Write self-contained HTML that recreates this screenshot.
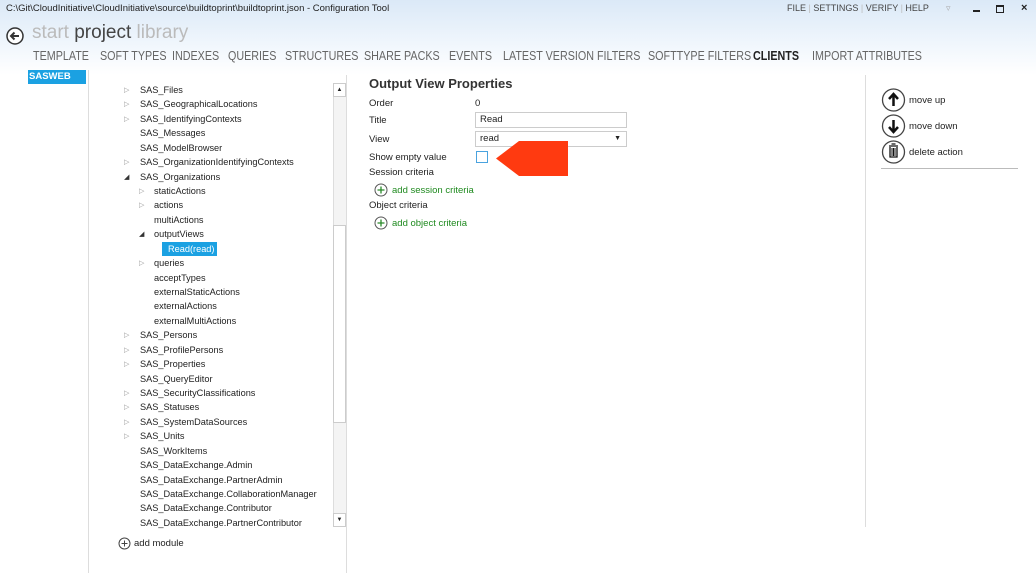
<!DOCTYPE html>
<html><head><style>
body{margin:0;width:1036px;height:573px;overflow:hidden;font-family:"Liberation Sans",sans-serif;color:#222;background:linear-gradient(#dbe9f7 0,#eef5fc 40px,#fff 75px,#fff);position:relative}
.a{position:absolute;white-space:nowrap}
.t{font-size:9.5px}
.tree div{position:absolute;font-size:9.2px;white-space:nowrap;height:14px;line-height:14px}
.arr{position:absolute;font-size:7px;color:#999}
.nav span{position:absolute;top:49px;font-size:12.5px;color:#666;transform:scaleX(0.86);transform-origin:0 0;white-space:nowrap}
</style></head><body>
<div class="a" style="left:6px;top:3px;font-size:9.5px;color:#222">C:\Git\CloudInitiative\CloudInitiative\source\buildtoprint\buildtoprint.json - Configuration Tool</div>
<div class="a" style="left:787px;top:3px;font-size:9px;color:#444">FILE <span style="color:#bbb">|</span> SETTINGS <span style="color:#bbb">|</span> VERIFY <span style="color:#bbb">|</span> HELP</div>
<div class="a" style="left:946px;top:3px;font-size:9px;color:#aaa">▿</div>
<div class="a" style="left:973px;top:10px;width:7px;height:2px;background:#222"></div>
<div class="a" style="left:996px;top:5px;width:6px;height:5px;border:1.5px solid #222;border-top-width:2px"></div>
<div class="a" style="left:1021px;top:2px;font-size:11px;font-weight:bold">×</div>
<svg class="a" style="left:6px;top:27px" width="18" height="18"><circle cx="9" cy="9" r="8" fill="#fff" stroke="#333" stroke-width="1.5"/><path d="M13 9H5M8.5 5.5L5 9l3.5 3.5" stroke="#333" stroke-width="2" fill="none"/></svg>
<div class="a" style="left:32px;top:22px;font-size:19px;color:#bbb">start <span style="color:#444">project</span> library</div>
<div class="nav"><span style="left:33px">TEMPLATE</span><span style="left:100px">SOFT TYPES</span><span style="left:172px">INDEXES</span><span style="left:228px">QUERIES</span><span style="left:285px">STRUCTURES</span><span style="left:364px">SHARE PACKS</span><span style="left:449px">EVENTS</span><span style="left:503px">LATEST VERSION FILTERS</span><span style="left:648px">SOFTTYPE FILTERS</span><span style="left:753px;color:#222;font-weight:bold">CLIENTS</span><span style="left:812px">IMPORT ATTRIBUTES</span></div>
<div class="a" style="left:28px;top:70px;width:57px;height:14px;background:#1ba1e2;color:#fff;font-weight:bold;font-size:9.5px;line-height:14px;padding-left:1px">SASWEB</div>
<div class="a" style="left:88px;top:70px;width:1px;height:503px;background:#ddd"></div>
<div class="a" style="left:346px;top:75px;width:1px;height:498px;background:#ddd"></div>
<div class="a" style="left:865px;top:75px;width:1px;height:452px;background:#ddd"></div>
<div class="a" style="left:333px;top:83px;width:12px;height:444px;background:#f4f4f4;border-left:1px solid #ddd"></div>
<div class="a" style="left:333px;top:83px;width:11px;height:12px;border:1px solid #ccc;background:#fff;font-size:6px;text-align:center;line-height:12px">▲</div>
<div class="a" style="left:333px;top:513px;width:11px;height:12px;border:1px solid #ccc;background:#fff;font-size:6px;text-align:center;line-height:12px">▼</div>
<div class="a" style="left:333px;top:225px;width:11px;height:196px;border:1px solid #ccc;background:#fff"></div>
<div class="tree">
<div style="left:140px;top:83px">SAS_Files</div>
<div style="left:140px;top:97px">SAS_GeographicalLocations</div>
<div style="left:140px;top:112px">SAS_IdentifyingContexts</div>
<div style="left:140px;top:126px">SAS_Messages</div>
<div style="left:140px;top:141px">SAS_ModelBrowser</div>
<div style="left:140px;top:155px">SAS_OrganizationIdentifyingContexts</div>
<div style="left:140px;top:170px">SAS_Organizations</div>
<div style="left:154px;top:184px">staticActions</div>
<div style="left:154px;top:198px">actions</div>
<div style="left:154px;top:213px">multiActions</div>
<div style="left:154px;top:227px">outputViews</div>
<div style="left:162px;top:242px;background:#1ba1e2;color:#fff;padding:0 3px 0 6px">Read(read)</div>
<div style="left:154px;top:256px">queries</div>
<div style="left:154px;top:271px">acceptTypes</div>
<div style="left:154px;top:285px">externalStaticActions</div>
<div style="left:154px;top:299px">externalActions</div>
<div style="left:154px;top:314px">externalMultiActions</div>
<div style="left:140px;top:328px">SAS_Persons</div>
<div style="left:140px;top:343px">SAS_ProfilePersons</div>
<div style="left:140px;top:357px">SAS_Properties</div>
<div style="left:140px;top:372px">SAS_QueryEditor</div>
<div style="left:140px;top:386px">SAS_SecurityClassifications</div>
<div style="left:140px;top:400px">SAS_Statuses</div>
<div style="left:140px;top:415px">SAS_SystemDataSources</div>
<div style="left:140px;top:429px">SAS_Units</div>
<div style="left:140px;top:444px">SAS_WorkItems</div>
<div style="left:140px;top:458px">SAS_DataExchange.Admin</div>
<div style="left:140px;top:473px">SAS_DataExchange.PartnerAdmin</div>
<div style="left:140px;top:487px">SAS_DataExchange.CollaborationManager</div>
<div style="left:140px;top:501px">SAS_DataExchange.Contributor</div>
<div style="left:140px;top:516px">SAS_DataExchange.PartnerContributor</div>
</div>
<div class="arr" style="left:124px;top:86px">▷</div>
<div class="arr" style="left:124px;top:100px">▷</div>
<div class="arr" style="left:124px;top:115px">▷</div>
<div class="arr" style="left:124px;top:158px">▷</div>
<div class="arr" style="left:124px;top:173px;color:#333">◢</div>
<div class="arr" style="left:139px;top:187px">▷</div>
<div class="arr" style="left:139px;top:201px">▷</div>
<div class="arr" style="left:139px;top:230px;color:#333">◢</div>
<div class="arr" style="left:139px;top:259px">▷</div>
<div class="arr" style="left:124px;top:331px">▷</div>
<div class="arr" style="left:124px;top:346px">▷</div>
<div class="arr" style="left:124px;top:360px">▷</div>
<div class="arr" style="left:124px;top:389px">▷</div>
<div class="arr" style="left:124px;top:403px">▷</div>
<div class="arr" style="left:124px;top:418px">▷</div>
<div class="arr" style="left:124px;top:432px">▷</div>
<svg class="a" style="left:118px;top:537px" width="13" height="13"><circle cx="6.5" cy="6.5" r="5.5" fill="none" stroke="#444"/><path d="M6.5 3.5v6M3.5 6.5h6" stroke="#444"/></svg>
<div class="a t" style="left:134px;top:538px">add module</div>
<div class="a" style="left:369px;top:76px;font-size:13px;font-weight:bold;color:#333">Output View Properties</div>
<div class="a t" style="left:369px;top:98px">Order</div>
<div class="a t" style="left:475px;top:98px">0</div>
<div class="a t" style="left:369px;top:115px">Title</div>
<div class="a t" style="left:475px;top:112px;width:146px;height:14px;border:1px solid #ccc;padding-left:4px;line-height:14px;background:#fff">Read</div>
<div class="a t" style="left:369px;top:134px">View</div>
<div class="a t" style="left:475px;top:131px;width:146px;height:14px;border:1px solid #ccc;padding-left:4px;line-height:14px;background:#fff">read<span style="position:absolute;right:5px;font-size:7px">▼</span></div>
<div class="a t" style="left:369px;top:152px">Show empty value</div>
<div class="a" style="left:476px;top:151px;width:10px;height:10px;border:1px solid #4aa3df;background:#fff"></div>
<svg class="a" style="left:496px;top:141px" width="72" height="35"><path d="M0 17.5L23 0H72V35H23Z" fill="#ff3a10"/></svg>
<div class="a t" style="left:369px;top:167px">Session criteria</div>
<svg class="a" style="left:374px;top:183px" width="14" height="14"><circle cx="7" cy="7" r="6" fill="none" stroke="#555"/><path d="M7 3.5v7M3.5 7h7" stroke="#2a8a2a" stroke-width="1.3"/></svg>
<div class="a t" style="left:392px;top:185px;color:#1f8a1f">add session criteria</div>
<div class="a t" style="left:369px;top:200px">Object criteria</div>
<svg class="a" style="left:374px;top:216px" width="14" height="14"><circle cx="7" cy="7" r="6" fill="none" stroke="#555"/><path d="M7 3.5v7M3.5 7h7" stroke="#2a8a2a" stroke-width="1.3"/></svg>
<div class="a t" style="left:392px;top:218px;color:#1f8a1f">add object criteria</div>
<svg class="a" style="left:881px;top:88px" width="26" height="76"><g fill="#fff" stroke="#444" stroke-width="1.3"><circle cx="12.5" cy="12" r="11"/><circle cx="12.5" cy="38" r="11"/><circle cx="12.5" cy="64" r="11"/></g><path d="M12.5 18V7M8 11l4.5-5 4.5 5" stroke="#111" stroke-width="2.5" fill="none"/><path d="M12.5 32v11M8 39l4.5 5 4.5-5" stroke="#111" stroke-width="2.5" fill="none"/><path d="M8 58h9M10.5 56h4M9 59v10h7V59" stroke="#111" stroke-width="1.3" fill="none"/><path d="M11 60v8M12.5 60v8M14 60v8" stroke="#111"/></svg>
<div class="a t" style="left:909px;top:95px">move up</div>
<div class="a t" style="left:909px;top:121px">move down</div>
<div class="a t" style="left:909px;top:147px">delete action</div>
<div class="a" style="left:881px;top:168px;width:137px;height:1px;background:#bbb"></div>
</body></html>
